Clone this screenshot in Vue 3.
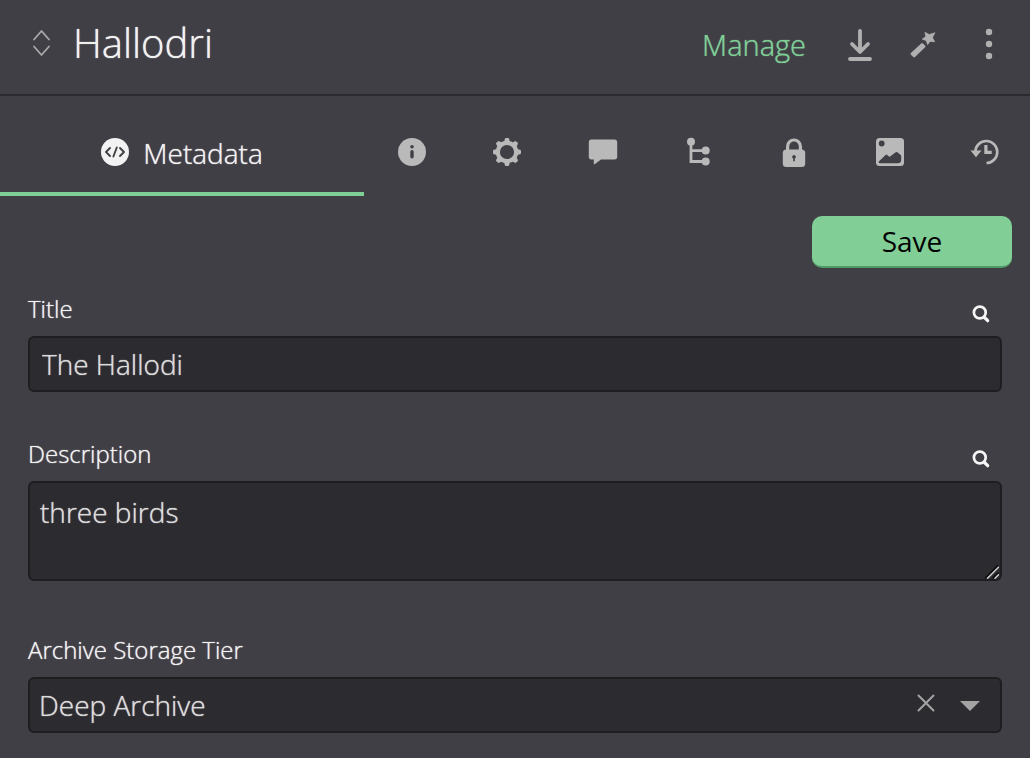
<script setup>
import { ref } from 'vue'

const title = ref('The Hallodi')
const description = ref('three birds')
const tier = ref('Deep Archive')
const tiers = ['Deep Archive', 'Glacier', 'Standard']
const activeTab = ref('metadata')
const tabs = ['info', 'settings', 'comments', 'relations', 'permissions', 'preview', 'history']
</script>

<template>
  <main class="panel">
    <header class="header">
      <button class="icon-btn" type="button" aria-label="Previous or next item">
        <svg width="20" height="28" viewBox="0 0 20 28" fill="none" stroke="#a9a9aa" stroke-width="1.8" stroke-linecap="round" stroke-linejoin="round">
          <path d="M2 10.500 9.500 2l7.500 8.500M2 17.500 9.500 26l7.500-8.500" />
        </svg>
      </button>
      <h1>Hallodri</h1>
      <a class="manage" href="#manage">Manage</a>
      <button class="icon-btn download" type="button" aria-label="Download">
        <svg width="24" height="32" viewBox="0 0 24 32" fill="none" stroke="#b0b0b1" stroke-width="3.800" stroke-linecap="round" stroke-linejoin="round">
          <path d="M12 2v20.500M4 15l8 8 8-8M2 30h20" />
        </svg>
      </button>
      <button class="icon-btn wand" type="button" aria-label="Actions">
        <svg width="26" height="26" viewBox="0 0 26 26" fill="#b0b0b1">
          <path d="M11.200 11.400a1.200 1.200 0 0 1 1.700 0l2.200 2.200a1.200 1.200 0 0 1 0 1.700L5 25.100a1.200 1.200 0 0 1-1.700 0L.900 22.700a1.200 1.200 0 0 1 0-1.700z" />
          <path d="m14.900.200 4.300 2.200 5.800-1.700-2.500 4.900 2.200 4.200-4.700-.400-2.400 3.300-1.500-4.100-4-1.400 3.600-2.700z" stroke="#b0b0b1" stroke-width=".6" stroke-linejoin="round" />
        </svg>
      </button>
      <button class="icon-btn more" type="button" aria-label="More">
        <svg width="8" height="32" viewBox="0 0 8 32" fill="#b0b0b1">
          <circle cx="4" cy="4" r="3.200" /><circle cx="4" cy="16" r="3.200" /><circle cx="4" cy="28" r="3.200" />
        </svg>
      </button>
    </header>

    <nav class="tabs" aria-label="Sections">
      <button class="tab" :class="{ active: activeTab === 'metadata' }" type="button" @click="activeTab = 'metadata'">
        <svg width="28" height="28" viewBox="0 0 28 28">
          <circle cx="14" cy="14" r="14" fill="#f2f2f2" />
          <path d="m9 10-4 4 4 4M19 10l4 4-4 4M15.800 9.500l-3.400 9" fill="none" stroke="#403f45" stroke-width="1.900" stroke-linecap="round" stroke-linejoin="round" />
        </svg>
        <span>Metadata</span>
      </button>
      <button v-for="tab in tabs" :key="tab" class="tab" :class="{ active: activeTab === tab }" type="button" :aria-label="tab" @click="activeTab = tab">
        <svg width="30" height="30" viewBox="0 0 30 30" fill="#b9b9b9">
          <template v-if="tab === 'info'">
            <circle cx="15" cy="15" r="14" />
            <g fill="#403f45"><circle cx="15" cy="9.700" r="1.800" /><rect x="13.300" y="13" width="3.400" height="8.500" rx="1.700" /></g>
          </template>
          <template v-else-if="tab === 'settings'">
            <circle cx="15" cy="15" r="9.200" fill="none" stroke="#b9b9b9" stroke-width="4.200" />
            <g v-for="n in 8" :key="n" :transform="`rotate(${n * 45} 15 15)`">
              <path d="M12 5.500 12.800 1.900Q13 1 14 1h2q1 0 1.200.900L18 5.500z" />
            </g>
          </template>
          <path v-else-if="tab === 'comments'" d="M3.500 2.500h23a2.700 2.700 0 0 1 2.700 2.700v14.600a2.700 2.700 0 0 1-2.700 2.700H13l-6 4.500a.700.700 0 0 1-1.200-.600v-3.900H3.500A2.700 2.700 0 0 1 .800 19.800V5.200a2.700 2.700 0 0 1 2.700-2.700z" />
          <template v-else-if="tab === 'relations'">
            <path d="M7 5v19.500h15M7 13.700h15" fill="none" stroke="#b9b9b9" stroke-width="2.800" />
            <circle cx="7" cy="4.800" r="4" /><circle cx="21.700" cy="13.600" r="4" /><circle cx="21.700" cy="24.500" r="4" />
          </template>
          <template v-else-if="tab === 'permissions'">
            <path d="M8.600 13V9.400a6.400 6.400 0 0 1 12.800 0V13" fill="none" stroke="#b9b9b9" stroke-width="3.200" />
            <rect x="3.800" y="12.500" width="22.400" height="17.500" rx="3.500" />
            <path d="M15 18a1.900 1.900 0 0 1 .800 3.600v2.600h-1.600v-2.600A1.900 1.900 0 0 1 15 18z" fill="#403f45" />
          </template>
          <template v-else-if="tab === 'preview'">
            <rect x="1" y="1" width="28" height="28" rx="3.500" />
            <g fill="#403f45">
              <circle cx="6.700" cy="6.500" r="2.900" />
              <path d="M3.800 24.500 10.500 18q.800-.800 1.700 0l1.800 1.500q.700.500 1.500-.200l4.800-3.800q1.300-1 2.500 0l3.400 3v4.200q0 3.500-3.500 3.500H5q-2 0-1.200-1.700z" />
            </g>
          </template>
          <template v-else>
            <path d="M5.300 14.500A11 11 0 1 1 16.500 26" fill="none" stroke="#b9b9b9" stroke-width="2.600" />
            <path d="M.500 13.400h11L6 20.200zM14.300 8h3.200v5.800h4.200V17h-7.400z" />
          </template>
        </svg>
      </button>
    </nav>

    <form class="form" @submit.prevent>
      <button class="save" type="submit">Save</button>

      <div class="field">
        <div class="label-row">
          <label for="title">Title</label>
          <button class="icon-btn search" type="button" aria-label="Search title">
            <svg width="18" height="18" viewBox="0 0 18 18" fill="none" stroke="#f6f6f6" stroke-linecap="round">
              <circle cx="7.800" cy="7.500" r="5.900" stroke-width="2.700" /><path d="m12.500 12.500 3.200 3.200" stroke-width="3.200" />
            </svg>
          </button>
        </div>
        <input id="title" v-model="title" class="control" type="text" />
      </div>

      <div class="field description">
        <div class="label-row">
          <label for="description">Description</label>
          <button class="icon-btn search" type="button" aria-label="Search description">
            <svg width="18" height="18" viewBox="0 0 18 18" fill="none" stroke="#f6f6f6" stroke-linecap="round">
              <circle cx="7.800" cy="7.500" r="5.900" stroke-width="2.700" /><path d="m12.500 12.500 3.200 3.200" stroke-width="3.200" />
            </svg>
          </button>
        </div>
        <div class="wrap">
          <textarea id="description" v-model="description" class="control area"></textarea>
          <svg class="grip" width="14" height="14" viewBox="0 0 14 14" fill="none">
            <path d="M.500 13.500 13.500.500M8 13.500l5.500-5.500" stroke="#0c0c0d" stroke-width="2.400" />
            <path d="m2 13.700 12-12M9.500 13.700 14 9.200" stroke="#cfcfcf" stroke-width="1.600" />
          </svg>
        </div>
      </div>

      <div class="field">
        <div class="label-row">
          <label for="tier">Archive Storage Tier</label>
        </div>
        <div class="wrap">
          <select id="tier" v-model="tier" class="control select">
            <option v-for="t in tiers" :key="t">{{ t }}</option>
          </select>
          <button class="icon-btn clear" type="button" aria-label="Clear" @click="tier = ''">
            <svg width="18" height="18" viewBox="0 0 18 18" fill="none" stroke="#a3a3a4" stroke-width="2" stroke-linecap="round">
              <path d="m1.500 1.500 15 15M16.500 1.500l-15 15" />
            </svg>
          </button>
          <svg class="caret" width="20" height="10" viewBox="0 0 20 10" fill="#a3a3a4"><path d="M0 0h20L10 10z" /></svg>
        </div>
      </div>
    </form>
  </main>
</template>

<style>
body {
  background: #403f45;
}
</style>

<style scoped>
.panel {
  min-height: 100vh;
  box-sizing: border-box;
  overflow: hidden;
  background: #403f45;
  color: #f2f2f2;
  font-family: "Open Sans", "Noto Sans", sans-serif;
  font-weight: 300;
}
button,
input,
textarea,
select {
  font: inherit;
  color: inherit;
}
h1,
.manage,
.tab,
label,
.control {
  text-shadow: 0 0 1px currentColor;
}
.icon-btn {
  display: flex;
  padding: 0;
  border: 0;
  background: none;
  cursor: pointer;
}
.header {
  display: flex;
  align-items: center;
  height: 86px;
  padding: 0 37px 8px 32px;
  border-bottom: 2px solid #2b2a2e;
}
h1 {
  flex: 1;
  margin: 0 0 0 21px;
  font-size: 40px;
  line-height: 56px;
  font-weight: inherit;
}
.manage {
  color: #7fcf97;
  font-size: 29px;
  line-height: 40px;
  text-decoration: none;
  padding-top: 4px;
}
.download {
  margin: 4px 0 0 42px;
}
.wand {
  margin: 4px 0 0 38px;
}
.more {
  margin: 2px 0 0 49px;
}
.tabs {
  display: grid;
  grid-template-columns: 728fr repeat(7, 191fr);
  height: 100px;
  margin-right: -3px;
}
.tab {
  display: flex;
  align-items: center;
  justify-content: center;
  gap: 14px;
  padding: 16px 0 0;
  border: 0;
  border-bottom: 4px solid transparent;
  background: none;
  font-size: 28px;
  cursor: pointer;
}
.tab.active {
  border-color: #7fcf97;
}
.tab span {
  padding-top: 2px;
}
.form {
  display: flex;
  flex-direction: column;
  padding: 20px 28px 25px;
}
.save {
  align-self: flex-end;
  width: 200px;
  height: 52px;
  margin-right: -10px;
  padding: 0;
  border: 0;
  border-bottom: 2px solid #4f9a66;
  border-radius: 10px;
  background: #81ce96;
  color: #000;
  font-size: 28px;
  font-weight: 400;
  cursor: pointer;
}
.field {
  padding-top: 22px;
}
.field + .field {
  margin-top: 21px;
}
.description + .field {
  margin-top: 28px;
}
.label-row {
  display: flex;
  align-items: center;
  justify-content: space-between;
  height: 38px;
  margin-bottom: 8px;
  padding-right: 12px;
}
label {
  font-size: 24px;
  line-height: 36px;
}
.search {
  margin-top: 10px;
}
.wrap {
  position: relative;
}
.control {
  display: block;
  box-sizing: border-box;
  width: 100%;
  height: 56px;
  padding: 0 12px;
  border: 2px solid #1e1d20;
  border-radius: 6px;
  outline: 0;
  background: #2c2b2f;
  color: #dcdcdc;
  font-size: 28px;
}
.area {
  height: 100px;
  padding: 10px;
  line-height: 38px;
  resize: none;
}
.select {
  appearance: none;
  padding: 0 100px 0 9px;
}
.grip {
  position: absolute;
  right: 3px;
  bottom: 2px;
  pointer-events: none;
}
.clear {
  position: absolute;
  right: 67px;
  top: 17px;
}
.caret {
  position: absolute;
  right: 22px;
  top: 24px;
  pointer-events: none;
}
</style>
